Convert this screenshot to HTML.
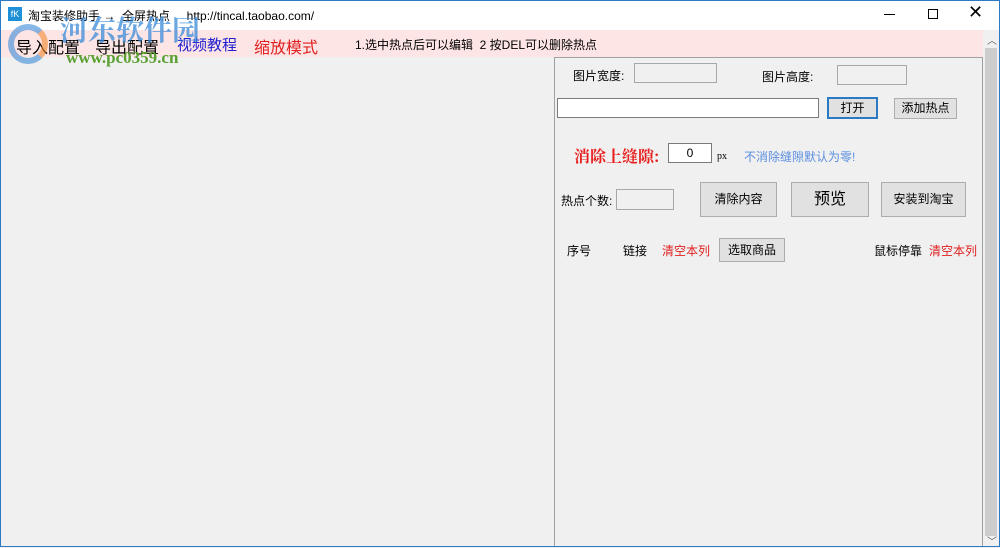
<!DOCTYPE html>
<html><head><meta charset="utf-8"><style>
*{margin:0;padding:0;box-sizing:border-box}
body{width:1000px;height:547px;overflow:hidden;background:#f0f0f0;font-family:"Liberation Sans","Noto Sans CJK SC",sans-serif;font-size:12px;position:relative;color:#000}
.a{position:absolute}
.win{left:0;top:0;width:1000px;height:547px;border:1px solid #2b7bc4;border-top:none}
.tb{left:0;top:0;width:1000px;height:30px;background:#fff;border-top:1px solid #2b7bc4}
.menu{left:1px;top:30px;width:982px;height:27px;background:#fde5e5}
.panel{left:554px;top:57px;width:429px;height:490px;border:1px solid #a0a0a0;border-bottom:none;background:#f0f0f0}
.inp{background:#f0f0f0;border:1px solid #a8a8a8}
.btn{background:#e1e1e1;border:1px solid #adadad;text-align:center}
.sb{left:983px;top:30px;width:16px;height:516px;background:#f0f0f0}
</style></head><body>
<div class="a tb"></div>
<div class="a" style="left:8px;top:7px;width:14px;height:14px;background:#1e90d8;color:#fff;font-size:9px;line-height:14px;text-align:center">fK</div>
<div class="a" style="left:28px;top:7px;font-size:12px">淘宝装修助手 →&nbsp; 全屏热点&nbsp;&nbsp;&nbsp;&nbsp; http://tincal.taobao.com/</div>
<div class="a" style="left:884px;top:14px;width:11px;height:1px;background:#000"></div>
<div class="a" style="left:928px;top:9px;width:10px;height:10px;border:1px solid #000"></div>
<div class="a" style="left:968px;top:2px;font-size:18px;font-weight:300">✕</div>
<div class="a menu"></div>
<div class="a" style="left:16px;top:34px;font-size:16px">导入配置</div>
<div class="a" style="left:95px;top:34px;font-size:16px">导出配置</div>
<div class="a" style="left:177px;top:34px;font-size:15px;color:#2020d0">视频教程</div>
<div class="a" style="left:254px;top:34px;font-size:16px;color:#e02020">缩放模式</div>
<div class="a" style="left:355px;top:36px;font-size:12px">1.选中热点后可以编辑&nbsp; 2 按DEL可以删除热点</div>
<div class="a" style="left:60px;top:9px;font-size:28px;font-weight:bold;color:#3a8ad8;opacity:.75;font-family:'Noto Serif CJK SC',serif">河东软件园</div>
<div class="a" style="left:66px;top:48px;font-size:17px;font-weight:bold;color:#5aa030;font-family:'Liberation Serif',serif">www.pc0359.cn</div>
<div class="a" style="left:8px;top:24px;width:40px;height:40px;border-radius:50%;border:6px solid #3a8ad8;border-right-color:#f08a30;opacity:.6"></div>
<div class="a panel"></div>
<div class="a" style="left:573px;top:67px">图片宽度:</div>
<div class="a inp" style="left:634px;top:63px;width:83px;height:20px"></div>
<div class="a" style="left:762px;top:68px">图片高度:</div>
<div class="a inp" style="left:837px;top:65px;width:70px;height:20px"></div>
<div class="a" style="left:557px;top:98px;width:262px;height:20px;background:#fff;border:1px solid #7a7a7a"></div>
<div class="a btn" style="left:827px;top:97px;width:51px;height:22px;border:2px solid #2b7bc4;line-height:18px">打开</div>
<div class="a btn" style="left:894px;top:98px;width:63px;height:21px;line-height:19px">添加热点</div>
<div class="a" style="left:574px;top:144px;font-size:16px;font-weight:bold;color:#e82020;font-family:'Noto Serif CJK SC',serif">消除上缝隙:</div>
<div class="a" style="left:668px;top:143px;width:44px;height:20px;background:#fff;border:1px solid #7a7a7a;text-align:center;line-height:18px">0</div>
<div class="a" style="left:717px;top:151px;font-size:10px;font-family:'Liberation Serif',serif">px</div>
<div class="a" style="left:744px;top:148px;color:#5b8ee0">不消除缝隙默认为零!</div>
<div class="a" style="left:561px;top:192px">热点个数:</div>
<div class="a inp" style="left:616px;top:189px;width:58px;height:21px"></div>
<div class="a btn" style="left:700px;top:182px;width:77px;height:35px;line-height:33px;font-size:12px">清除内容</div>
<div class="a btn" style="left:791px;top:182px;width:78px;height:35px;line-height:33px;font-size:16px">预览</div>
<div class="a btn" style="left:881px;top:182px;width:85px;height:35px;line-height:33px;font-size:12px">安装到淘宝</div>
<div class="a" style="left:567px;top:242px">序号</div>
<div class="a" style="left:623px;top:242px">链接</div>
<div class="a" style="left:662px;top:242px;color:#e02020">清空本列</div>
<div class="a btn" style="left:719px;top:238px;width:66px;height:24px;line-height:22px">选取商品</div>
<div class="a" style="left:874px;top:242px">鼠标停靠</div>
<div class="a" style="left:929px;top:242px;color:#e02020">清空本列</div>
<div class="a sb"></div>
<div class="a" style="left:985px;top:48px;width:12px;height:488px;background:#cdcdcd"></div>
<div class="a" style="left:987px;top:32px;font-size:10px;color:#606060">︿</div>
<div class="a" style="left:987px;top:533px;font-size:10px;color:#606060">﹀</div>
<div class="a win"></div>
</body></html>
